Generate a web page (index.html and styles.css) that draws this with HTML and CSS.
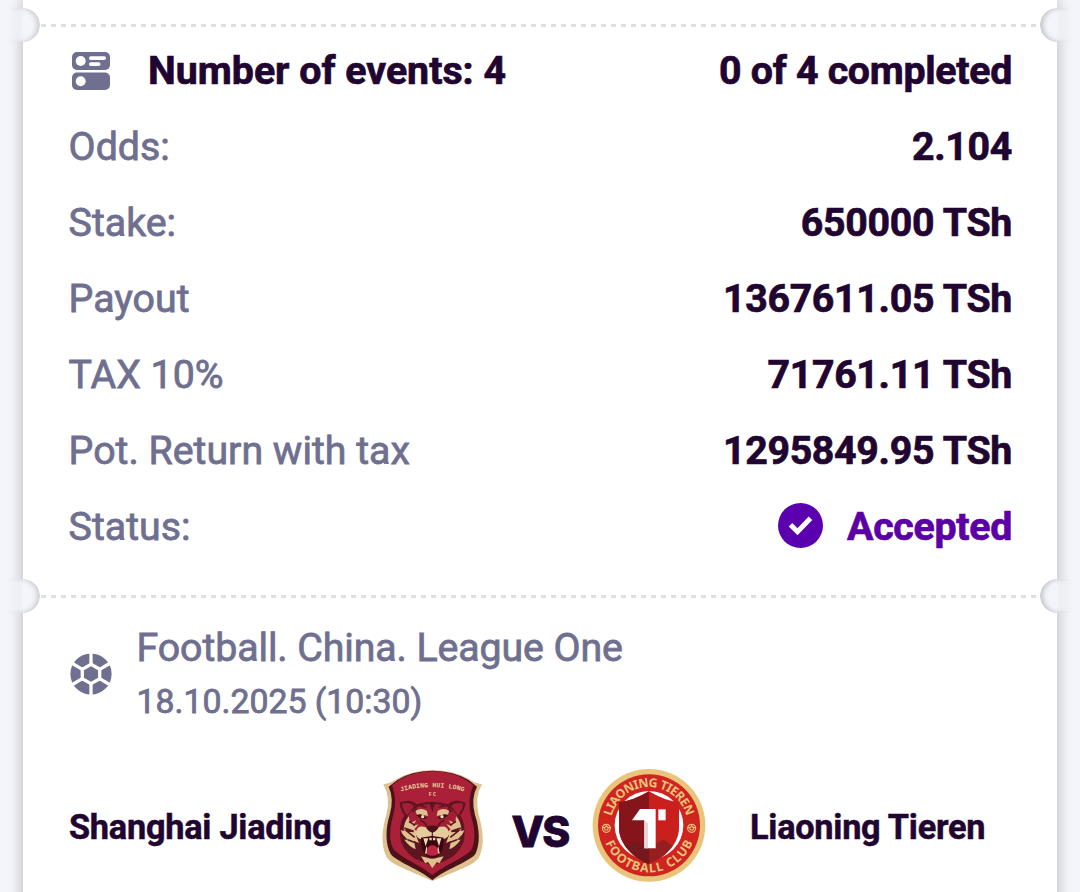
FILE: index.html
```
<!DOCTYPE html>
<html lang="en">
<head>
  <meta charset="UTF-8">
  <title>Bet slip</title>
  <link rel="stylesheet" href="styles.css">
</head>
<body>
  <main class="ticket">
    <div class="divider"></div>

    <section class="summary">
      <div class="row row-head">
        <svg class="events-icon" viewBox="0 0 38 38">
          <rect width="38" height="18" rx="5" fill="#6f6f8f"/>
          <rect y="20.5" width="38" height="17.5" rx="5" fill="#6f6f8f"/>
          <circle cx="8.7" cy="9" r="5" fill="#fff"/>
          <circle cx="8.7" cy="29.3" r="5" fill="#fff"/>
          <rect x="17" y="4.3" width="17" height="3.7" rx="1.8" fill="#fff"/>
          <rect x="17" y="10.3" width="11.5" height="3.7" rx="1.8" fill="#fff"/>
        </svg>
        <span class="title">Number of events: 4</span>
        <span class="value">0 of 4 completed</span>
      </div>
      <div class="row"><span class="label">Odds:</span><span class="value">2.104</span></div>
      <div class="row"><span class="label">Stake:</span><span class="value">650000 TSh</span></div>
      <div class="row"><span class="label">Payout</span><span class="value">1367611.05 TSh</span></div>
      <div class="row"><span class="label">TAX 10%</span><span class="value">71761.11 TSh</span></div>
      <div class="row"><span class="label">Pot. Return with tax</span><span class="value">1295849.95 TSh</span></div>
      <div class="row">
        <span class="label">Status:</span>
        <svg class="check" viewBox="0 0 45 45">
          <circle cx="22.5" cy="22.5" r="22.5" fill="#5b00ae"/>
          <path d="M12.5 21.8l7 7 13-13.5" fill="none" stroke="#fff" stroke-width="5"/>
        </svg>
        <span class="value accepted">Accepted</span>
      </div>
    </section>

    <div class="divider"></div>

    <section class="event">
      <div class="league">
        <svg class="ball" viewBox="0 0 42 42">
          <circle cx="21" cy="21" r="20.6" fill="#6f6f8f"/>
          <g fill="none" stroke="#fff" stroke-width="3.3">
            <path d="M21 11.3l8.7 5v9.4L21 30.7l-8.7-5v-9.4z"/>
            <path d="M21 11.3V0M29.7 16.3L39.5 10.5M29.7 25.7l9.8 5.8M21 30.7V42M12.3 25.7L2.5 31.5M12.3 16.3L2.5 10.5"/>
          </g>
        </svg>
        <div>
          <div class="league-name">Football. China. League One</div>
          <div class="league-date">18.10.2025 (10:30)</div>
        </div>
      </div>

      <div class="teams">
        <span class="team">Shanghai Jiading</span>

        <svg class="crest" viewBox="0 0 390 390">
          <defs>
            <path id="shieldArc" d="M87 96Q187 67 287 96"/>
          </defs>
          <path d="M187 30Q120 31 76 60Q61 69 40 73Q63 112 49 164C36 206 32 251 48 288C60 311 92 320 120 334Q156 350 187 363Q221 350 258 334C290 319 318 311 329 288C345 250 338 207 326 164Q313 111 336 73Q315 69 300 59Q255 31 187 30z" fill="#dec18f"/>
          <path d="M187 32Q123 33 82 60L56 80Q73 116 59 165C46 207 46 252 62 282C79 305 151 329 187 361C224 329 299 305 316 282C331 251 329 208 315 165Q302 116 321 80L296 60Q252 33 187 32z" fill="#4c1218"/>
          <path d="M187 34Q126 35 86 61L66 76Q83 122 69 168C57 211 57 248 73 271C96 294 151 316 187 345C225 315 281 295 303 271C317 248 317 210 303 168Q291 120 310 76L289 61Q251 35 187 34z" fill="#ab2039"/>
          <text class="shield-text"><textPath href="#shieldArc" startOffset="50%">JIADING HUI LONG</textPath></text>
          <text class="shield-text shield-fc" x="189" y="107">FC</text>
          <!-- head and ears -->
          <path d="M89 127Q122 115 140 133Q187 117 234 133Q254 115 287 128Q283 154 270 166Q291 194 281 245Q264 287 223 303L187 318L150 303Q109 287 93 245Q82 200 103 166Q90 149 89 127z" fill="#5d151f"/>
          <path d="M96 131Q118 124 132 138L112 166Q98 150 96 131zM279 131Q257 124 243 138L264 166Q278 150 279 131z" fill="#a31f36"/>
          <path d="M112 170Q134 131 187 132Q244 133 264 170L274 203Q264 226 236 226L187 240L140 226Q108 226 102 203z" fill="#a31f36"/>
          <path d="M150 132l24 11-22-2zM225 132l-24 11 22-2zM179 132l8 25 8-25zM127 155l14-15-3 17zM248 155l-14-15 3 17z" fill="#5d151f"/>
          <!-- brows and eyes -->
          <path d="M136 153Q154 141 171 153L174 168Q153 161 143 169zM238 153Q220 141 203 153L200 168Q221 161 231 169z" fill="#dec18f"/>
          <path d="M139 166Q153 156 171 174Q154 182 139 166zM235 166Q221 156 203 174Q220 182 235 166z" fill="#3e1016"/>
          <circle cx="158" cy="170" r="5" fill="#efdcb0"/>
          <circle cx="216" cy="170" r="5" fill="#efdcb0"/>
          <path d="M151 180Q166 188 170 199M223 180Q208 188 204 199" fill="none" stroke="#5d151f" stroke-width="5"/>
          <!-- cheek fur -->
          <path d="M117 169Q100 188 101 214L92 210Q97 227 115 239L103 239Q117 259 137 268L132 243L147 249L138 226L151 223L133 208L146 193L128 198L139 181L119 190zM258 169Q275 188 274 214L283 210Q278 227 260 239L272 239Q258 259 238 268L243 243L228 249L237 226L224 223L242 208L229 193L247 198L236 181L256 190z" fill="#dec18f"/>
          <path d="M103 204l28 10-22-2 25 20M272 204l-28 10 22-2-25 20M117 184l18 12M258 184l-18 12M113 239l24 9M261 239l-24 9" fill="none" stroke="#5d151f" stroke-width="5"/>
          <!-- muzzle -->
          <path d="M168 202Q141 192 138 217Q136 236 158 239L187 226L216 239Q239 235 236 217Q232 193 206 202L187 210z" fill="#e6cb9c"/>
          <path d="M168 200Q187 193 206 200Q203 212 187 218Q171 212 168 200z" fill="#4c1218"/>
          <path d="M187 214v14" stroke="#4c1218" stroke-width="3"/>
          <path d="M153 233Q187 224 221 233Q222 272 204 288Q187 297 170 288Q152 272 153 233z" fill="#38070f"/>
          <path d="M160 235l7 24 8-24zM214 235l-7 24-8-24zM165 281l4-22 8 20zM209 281l-4-22-8 20z" fill="#efdcb0"/>
          <path d="M178 233h7v8h-7zM189 233h7v8h-7z" fill="#efdcb0"/>
          <path d="M170 283Q168 256 187 256Q206 256 204 283Q187 292 170 283z" fill="#c02542"/>
          <path d="M153 289L172 293Q187 299 202 293L221 289L208 310L201 306L187 324L174 306L166 310z" fill="#dec18f"/>
        </svg>

        <span class="versus">VS</span>

        <svg class="crest" viewBox="250 0 390 390">
          <defs>
            <path id="topArc" d="M330 196A115 115 0 0 1 560 196"/>
            <path id="bottomArc" d="M304 196A141 141 0 0 0 586 196"/>
            <clipPath id="leftHalf"><rect x="340" y="80" width="105" height="240"/></clipPath>
          </defs>
          <circle cx="445" cy="196" r="169" fill="#eac47b"/>
          <circle cx="445" cy="196" r="153" fill="#cf241f"/>
          <circle cx="445" cy="196" r="103" fill="#fff"/>
          <text class="ring-text"><textPath href="#topArc" startOffset="50%" textLength="306" lengthAdjust="spacing">LIAONING TIEREN</textPath></text>
          <text class="ring-text"><textPath href="#bottomArc" startOffset="50%" textLength="336" lengthAdjust="spacing">FOOTBALL CLUB</textPath></text>
          <g fill="none" stroke="#eac47b" stroke-width="3.5">
            <circle cx="317" cy="205" r="12"/>
            <circle cx="573" cy="205" r="12"/>
            <path d="M317 199l6 4-2 7h-8l-2-7zM573 199l6 4-2 7h-8l-2-7zM317 193v6M305 202l6 1M329 202l-6 1M573 193v6M561 202l6 1M585 202l-6 1"/>
          </g>
          <path d="M445 94Q399 122 355 127V206C357 253 396 292 445 313C494 292 533 253 535 206V127Q491 122 445 94z" fill="#ca201d"/>
          <path d="M445 94Q399 122 355 127V206C357 253 396 292 445 313z" fill="#85151a" clip-path="url(#leftHalf)"/>
          <path d="M375 260L399 244L418 252L445 229L470 249L489 238L516 258Q488 295 445 311Q402 294 375 260z" fill="#641b20" opacity=".5"/>
          <path d="M418 147H465V265H431V181H394z" fill="#fff"/>
          <path d="M431 181L442 190V265H431z" fill="#e3d8df"/>
          <path d="M473 148H495V181H473z" fill="#fff"/>
        </svg>

        <span class="team team-away">Liaoning Tieren</span>
      </div>
    </section>
  </main>
</body>
</html>
```
FILE: styles.css
```
:root {
  --bg: #f4f5fa;
  --text: #1f0530;
  --muted: #6f6f8f;
  --accent: #5b00a5;
}

* {
  box-sizing: border-box;
}

body {
  margin: 0;
  height: 892px;
  overflow: hidden;
  background: var(--bg);
  color: var(--text);
  font-family: Roboto, sans-serif;
  font-size: 39.3px;
}

.ticket {
  margin: 0 23px;
  height: 920px;
  padding-top: 8px;
  background: #fff;
  box-shadow: 0 0 14px rgba(0, 0, 0, 0.26);
}

.divider {
  position: relative;
  height: 34px;
  background: repeating-linear-gradient(90deg, #dde0e3 0 5px, transparent 5px 10px) 18px 16px / 999px 3px no-repeat;
}

/* notches cut in both edges */
.divider::before,
.divider::after {
  content: "";
  position: absolute;
  top: 0;
  width: 40px;
  height: 34px;
  background: var(--bg);
}

.divider::before {
  left: -23px;
  border-radius: 0 17px 17px 0;
  box-shadow: inset -3px 0 5px rgba(0, 0, 0, 0.16);
  -webkit-mask-image: linear-gradient(90deg, transparent 8px, #000 24px);
  mask-image: linear-gradient(90deg, transparent 8px, #000 24px);
}

.divider::after {
  right: -23px;
  border-radius: 17px 0 0 17px;
  box-shadow: inset 3px 0 5px rgba(0, 0, 0, 0.2);
  -webkit-mask-image: linear-gradient(270deg, transparent 8px, #000 24px);
  mask-image: linear-gradient(270deg, transparent 8px, #000 24px);
}

.summary {
  height: 537px;
  padding: 0 45px;
}

.row {
  display: flex;
  align-items: center;
  height: 76px;
  white-space: nowrap;
}

.row-head {
  height: 57px;
}

.row-head + .row {
  margin-top: 10px;
}

.events-icon {
  width: 38px;
  height: 38px;
  margin: 1px 38px 0 4px;
}

.title,
.value {
  font-weight: 700;
  -webkit-text-stroke: 0.7px currentColor;
}

.value {
  margin-left: auto;
  letter-spacing: -0.3px;
}

.label,
.league {
  color: var(--muted);
  -webkit-text-stroke: 0.8px currentColor;
}

.label {
  padding-left: 0.6px;
}

.check {
  width: 45px;
  height: 45px;
  margin: -4px 24px 0 auto;
}

.accepted {
  margin-left: 0;
  color: var(--accent);
}

.event {
  padding: 11px 46px 0;
}

.league {
  display: flex;
  align-items: center;
  height: 100px;
}

.ball {
  width: 42px;
  height: 42px;
  margin: 0 25px 0 0.6px;
}

.league-name {
  letter-spacing: -0.1px;
  line-height: 48px;
}

.league-date {
  margin-top: 8px;
  font-size: 33.8px;
  line-height: 44px;
}

.teams {
  display: flex;
  align-items: center;
  height: 130px;
  margin-top: 36px;
  white-space: nowrap;
}

.team {
  width: 301px;
  padding-top: 4px;
  font-size: 34.3px;
  font-weight: 700;
  letter-spacing: -0.25px;
  -webkit-text-stroke: 0.5px currentColor;
}

.team-away {
  width: 240px;
  margin-left: 36px;
}

.crest {
  width: 130px;
  height: 130px;
  flex: none;
}

.versus {
  width: 84px;
  padding: 15px 4px 0 0;
  text-align: center;
  font-family: Inter, sans-serif;
  font-size: 42.5px;
  font-weight: 800;
  letter-spacing: -2px;
  line-height: 1;
  -webkit-text-stroke: 0.8px currentColor;
}

.shield-text {
  fill: #e6cb9c;
  font: 700 20px "Liberation Mono", monospace;
  text-anchor: middle;
}

.shield-fc {
  font-size: 15px;
  letter-spacing: 4px;
}

.ring-text {
  fill: #eac47b;
  font: 700 37px "Noto Sans", sans-serif;
  text-anchor: middle;
}
```
